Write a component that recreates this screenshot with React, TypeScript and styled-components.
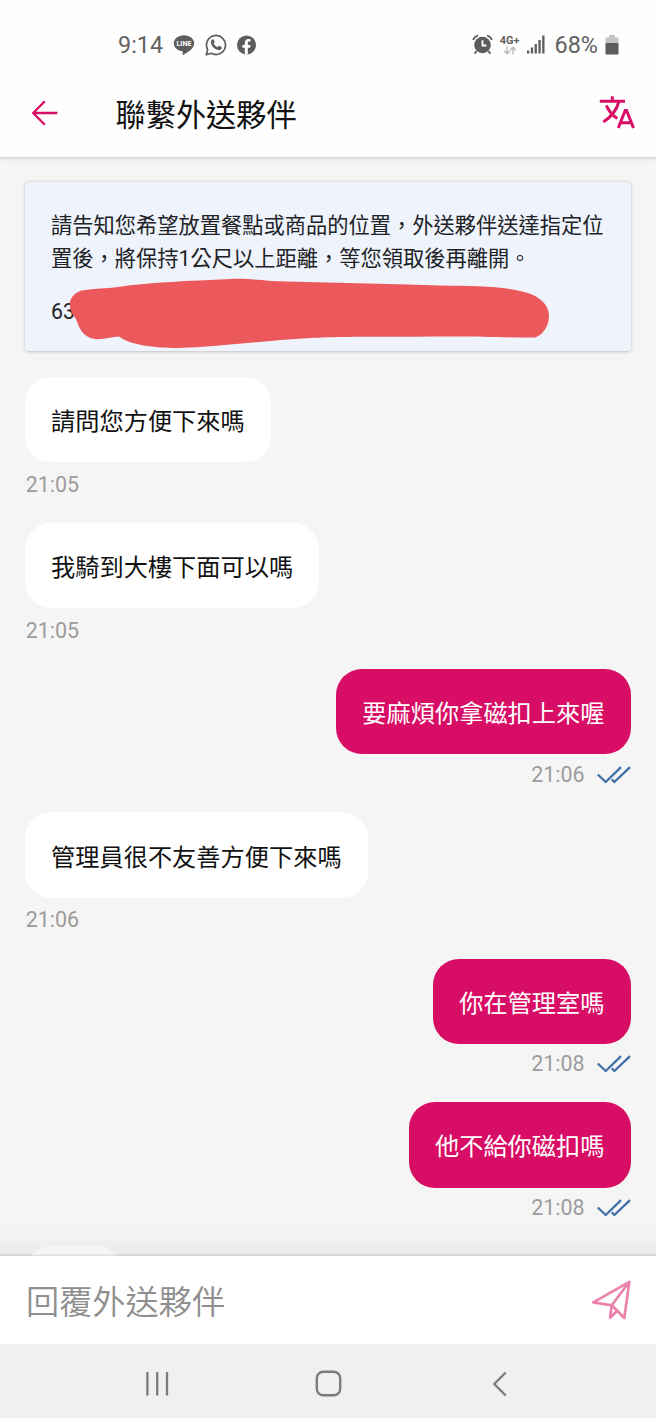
import React from 'react';
import styled, { createGlobalStyle } from 'styled-components';

const PINK = '#d80d65';

const GlobalStyle = createGlobalStyle`
  * { box-sizing: border-box; }
  body {
    margin: 0;
    background: #fdfdfd;
    font-family: Roboto, 'Noto Sans CJK TC', sans-serif;
    color: #111;
  }
  svg { display: block; flex: none; }
`;

const Screen = styled.div`
  width: 656px;
  height: 1421px;
  padding-bottom: 3px;
  display: flex;
  flex-direction: column;
  overflow: hidden;
`;

const StatusBar = styled.div`
  height: 69px;
  flex: none;
  padding: 20px 37px 0 118px;
  display: flex;
  justify-content: space-between;
  align-items: center;
  color: #626262;
  background: #fefefe;
  position: relative;
  z-index: 2;
`;

const StatusGroup = styled.div<{ $gap: number }>`
  display: flex;
  align-items: center;
  gap: ${(p) => p.$gap}px;
`;

const StatusText = styled.span`
  font-size: 23.4px;
  line-height: 28px;
`;

const Indicators = styled.div`
  display: flex;
  align-items: center;
  gap: 7px;
  margin-right: 3px;
`;

const Network = styled.div`
  display: flex;
  flex-direction: column;
  align-items: center;
  width: 20px;
  font-size: 11px;
  font-weight: 700;
  line-height: 11px;
`;

const Header = styled.header`
  height: 88px;
  flex: none;
  display: flex;
  align-items: center;
  padding: 0 21px 0 31px;
  background: #fefefe;
  box-shadow: 0 1px 4px rgba(0, 0, 0, 0.2);
  z-index: 1;
`;

const Title = styled.h1`
  flex: 1;
  margin: 0 0 0 57.5px;
  padding-top: 5px;
  font-size: 30.2px;
  line-height: 40px;
  font-weight: 400;
`;

const Chat = styled.main`
  flex: 1;
  min-height: 0;
  overflow: hidden;
  padding: 25px 25.5px 0 25px;
  background: linear-gradient(#f5f5f5 calc(100% - 32px), #f1f1f1 calc(100% - 16px), #e8e8e8);
`;

const Notice = styled.section`
  position: relative;
  height: 169px;
  margin-bottom: 25.7px;
  padding: 28px 0 0 26px;
  background: #eff3fb;
  border-radius: 3px;
  box-shadow: 0 0.5px 3px rgba(0, 0, 0, 0.22);
`;

const NoticeLine = styled.p`
  margin: 0;
  font-size: 21.25px;
  line-height: 32.5px;
  white-space: nowrap;
  color: #202226;
`;

const AddressLine = styled(NoticeLine)`
  margin-top: 21px;
`;

const Scribble = styled.svg`
  position: absolute;
  left: 44px;
  top: 94px;
`;

const Message = styled.div<{ $mine?: boolean }>`
  height: ${(p) => (p.$mine ? 143.6 : 146.1)}px;
  display: flex;
  flex-direction: column;
  align-items: ${(p) => (p.$mine ? 'flex-end' : 'flex-start')};
`;

const Bubble = styled.div<{ $mine?: boolean }>`
  height: 85.4px;
  display: flex;
  align-items: center;
  padding: 5px 26px 0;
  border-radius: 26px;
  font-size: 24.22px;
  line-height: 36px;
  white-space: nowrap;
  color: ${(p) => (p.$mine ? '#fff' : '#111')};
  background: ${(p) => (p.$mine ? PINK : '#fff')};
`;

const Meta = styled.div<{ $mine?: boolean }>`
  display: flex;
  align-items: center;
  gap: 12px;
  margin-top: ${(p) => (p.$mine ? 7.4 : 9.6)}px;
  padding-left: ${(p) => (p.$mine ? 0 : 0.7)}px;
  font-size: 21.4px;
  line-height: 26px;
  color: #9c9c9c;
`;

const NextBubble = styled.div`
  width: 98px;
  height: 85px;
  border-radius: 26px;
  background: #f5f5f5;
`;

const Composer = styled.div`
  height: 88px;
  flex: none;
  display: flex;
  align-items: center;
  justify-content: space-between;
  padding: 0 24px 0 26px;
  background: #fff;
  box-shadow: 0 -1px 2px rgba(0, 0, 0, 0.14);
  z-index: 1;
`;

const Placeholder = styled.span`
  padding-top: 5px;
  font-size: 33.2px;
  line-height: 44px;
  font-weight: 350;
  color: #8e8e8e;
`;

const NavBar = styled.nav`
  height: 74px;
  flex: none;
  display: flex;
  align-items: center;
  padding: 5px 0 0 145px;
  background: #f0f0f0;
`;

const NavButton = styled.div<{ $width: number }>`
  width: ${(p) => p.$width}px;
`;

const LineIcon = () => (
  <svg width="22" height="22" viewBox="0 0 22 22">
    <path
      fill="#5c5c5c"
      d="M11 1.2C5.3 1.2.8 4.8.8 9.3c0 4 3.4 7.2 8.2 7.9.7.2 1 .6.8 1.4l-.2 2c0 .4.3.6.7.3 4.9-2.7 10.9-6.6 10.900-11.600C21.200 4.800 16.700 1.200 11 1.200Z"
    />
    <text
      x="11"
      y="12"
      textAnchor="middle"
      fontSize="7"
      fontWeight="700"
      fill="#fff"
      textLength="15"
      lengthAdjust="spacingAndGlyphs"
    >
      LINE
    </text>
  </svg>
);

const WhatsAppIcon = () => (
  <svg width="22" height="22" viewBox="0 0 22 22" fill="none" stroke="#5c5c5c">
    <path
      strokeWidth="1.7"
      strokeLinejoin="round"
      d="M1.300 20.800 2.700 15.600A9.500 9.500 0 1 1 6.400 19.300Z"
    />
    <path
      fill="#5c5c5c"
      stroke="none"
      d="M7.300 5.600c.5-.5 1.300-.4 1.500.2l.8 1.900c.1.300 0 .6-.2.900l-.8 1c.9 1.700 2.200 2.900 4 3.700l1-1.200c.2-.3.500-.3.800-.2l1.900.9c.5.300.6.6.5 1.100-.3 1.500-1.600 2.300-3.100 2.100-4-.6-7.300-3.800-7.800-7.300-.1-1.200.5-2.400 1.400-3.100Z"
    />
  </svg>
);

const FacebookIcon = () => (
  <svg width="20" height="20" viewBox="0 0 20 20">
    <circle cx="9.500" cy="10" r="9.500" fill="#5c5c5c" />
    <path
      fill="#fff"
      d="M7.800 19.600V12.700H5.400V9.900h2.400V7.800c0-2.500 1.500-3.800 3.700-3.800.8 0 1.500.1 2.100.2v2.400h-1.300c-1.200 0-1.500.7-1.500 1.500v1.800h2.700l-.4 2.800h-2.300v6.900Z"
    />
  </svg>
);

const AlarmIcon = () => (
  <svg width="21" height="21" viewBox="0 0 21 21">
    <g stroke="#5c5c5c" strokeWidth="1.9" fill="none">
      <path d="M1 5.800Q2.500 2.600 5.900 1.400M20 5.800Q18.500 2.600 15.100 1.400" />
      <path d="m4.600 17-2 2.600M16.400 17l2 2.600" />
    </g>
    <circle cx="10.500" cy="11" r="8.300" fill="#5c5c5c" />
    <path d="M10.500 6.200v5.300h4" fill="none" stroke="#fff" strokeWidth="1.800" />
  </svg>
);

const DataArrows = () => (
  <svg width="14" height="9" viewBox="0 0 14 9" fill="none" stroke="#bdbdbd" strokeWidth="1.500">
    <path d="M4 .5v7M1.200 4.900 4 7.700l2.800-2.800M10 8.500v-7M7.200 4.100 10 1.300l2.800 2.800" />
  </svg>
);

const SignalIcon = () => (
  <svg width="18" height="19" viewBox="0 0 18 19" fill="#5c5c5c">
    <rect x="0" y="15.500" width="2.300" height="3" />
    <rect x="3.800" y="12.500" width="2.300" height="6" />
    <rect x="7.600" y="9" width="2.300" height="9.500" />
    <rect x="11.400" y="5" width="2.300" height="13.500" />
    <rect x="15.200" y="0.500" width="2.300" height="18" />
  </svg>
);

const BatteryIcon = () => (
  <svg width="14" height="20" viewBox="0 0 14 20">
    <path d="M4 0h6v2.500h2.500q1 0 1 1V8H.500V3.500q0-1 1-1H4Z" fill="#c4c4c4" />
    <path d="M.500 8h13v10.500q0 1-1 1h-11q-1 0-1-1Z" fill="#5c5c5c" />
  </svg>
);

const BackIcon = () => (
  <svg width="27" height="26" viewBox="0 0 27 26" fill="none" stroke={PINK} strokeWidth="2.300">
    <path d="M26.300 13H2.500M13.800 1.300 2.200 13l11.600 11.700" />
  </svg>
);

const TranslateIcon = () => (
  <svg width="36" height="34" viewBox="0 0 36 34" fill="none" stroke={PINK} strokeWidth="3">
    <path d="M.800 5.200h25.200M13.300.3v4.700" />
    <path d="M7.300 9.300c2.200 5.200 6 9.800 11 13.200M19.800 6C17.500 14 12 21.200 4.300 26" />
    <path d="M19.300 32 26.200 14.500h1.400L34.500 32M21.600 26.800h10.600" />
  </svg>
);

const SendIcon = () => (
  <svg
    width="41"
    height="40"
    viewBox="0 0 41 40"
    fill="none"
    stroke="#ea83ac"
    strokeWidth="2.700"
    strokeLinejoin="round"
  >
    <path d="M38.300 1.800 2.300 22.300l18.500 3 12.500 12.700ZM38.300 1.800 20.800 25.300l-1.700 12.500 6.600-6.500" />
  </svg>
);

const ReadTicks = () => (
  <svg width="34" height="18" viewBox="0 0 34 18" fill="none" stroke="#3f70a8" strokeWidth="2.300">
    <path d="m.800 8.500 7.900 7.500L24 1.200M14.800 13.400l2.600 2.600L33 1.200" />
  </svg>
);

const RecentsIcon = () => (
  <svg width="25" height="26" viewBox="0 0 25 26" stroke="#7c7c7c" strokeWidth="2.300">
    <path d="M2.400 1v23.500M12.200 1v23.500M22 1v23.500" />
  </svg>
);

const HomeIcon = () => (
  <svg width="27" height="27" viewBox="0 0 27 27" fill="none" stroke="#7c7c7c" strokeWidth="2.400">
    <rect x="1.800" y="1.800" width="23.400" height="23.400" rx="6.500" />
  </svg>
);

const NavBackIcon = () => (
  <svg width="15" height="26" viewBox="0 0 15 26" fill="none" stroke="#7c7c7c" strokeWidth="2.400">
    <path d="M13.700 1.500 2.300 13l11.400 11.500" />
  </svg>
);

interface ChatMessage {
  text: string;
  time: string;
  mine?: boolean;
}

const messages: ChatMessage[] = [
  { text: '請問您方便下來嗎', time: '21:05' },
  { text: '我騎到大樓下面可以嗎', time: '21:05' },
  { text: '要麻煩你拿磁扣上來喔', time: '21:06', mine: true },
  { text: '管理員很不友善方便下來嗎', time: '21:06' },
  { text: '你在管理室嗎', time: '21:08', mine: true },
  { text: '他不給你磁扣嗎', time: '21:08', mine: true },
];

export default function App() {
  return (
    <Screen lang="zh-Hant">
      <GlobalStyle />
      <StatusBar>
        <StatusGroup $gap={10}>
          <StatusText>9:14</StatusText>
          <LineIcon />
          <WhatsAppIcon />
          <FacebookIcon />
        </StatusGroup>
        <StatusGroup $gap={7}>
          <Indicators>
            <AlarmIcon />
            <Network>
              4G+
              <DataArrows />
            </Network>
            <SignalIcon />
          </Indicators>
          <StatusText>68%</StatusText>
          <BatteryIcon />
        </StatusGroup>
      </StatusBar>
      <Header>
        <BackIcon />
        <Title>聯繫外送夥伴</Title>
        <TranslateIcon />
      </Header>
      <Chat>
        <Notice>
          <NoticeLine>請告知您希望放置餐點或商品的位置，外送夥伴送達指定位</NoticeLine>
          <NoticeLine>置後，將保持1公尺以上距離，等您領取後再離開。</NoticeLine>
          <AddressLine>63</AddressLine>
          <Scribble width="484" height="76" viewBox="69 276 484 76">
            <path
              fill="#ec595c"
              d="M82 290.500C94 288 106 289 118 287C150 282 190 281 230 279C250 278 262 281 285 281.500C340 283 400 284 440 285.500C475 286 500 286 520 291C540 295 549 305 549 316C549 326 543 335 535 337.500C510 338 480 336 440 336.500C400 337 340 336 310 338C260 341 220 347 177 348C155 348 130 345 119 336.500C111 337 103 340 95 339C82 337 79 327 76 319C72 315 70 309 69.700 304C70 297 76 292 82 290.500Z"
            />
          </Scribble>
        </Notice>
        {messages.map((m, i) => (
          <Message key={i} $mine={m.mine}>
            <Bubble $mine={m.mine}>{m.text}</Bubble>
            <Meta $mine={m.mine}>
              {m.time}
              {m.mine && <ReadTicks />}
            </Meta>
          </Message>
        ))}
        <NextBubble />
      </Chat>
      <Composer>
        <Placeholder>回覆外送夥伴</Placeholder>
        <SendIcon />
      </Composer>
      <NavBar>
        <NavButton $width={169.500}>
          <RecentsIcon />
        </NavButton>
        <NavButton $width={177}>
          <HomeIcon />
        </NavButton>
        <NavButton $width={15}>
          <NavBackIcon />
        </NavButton>
      </NavBar>
    </Screen>
  );
}
